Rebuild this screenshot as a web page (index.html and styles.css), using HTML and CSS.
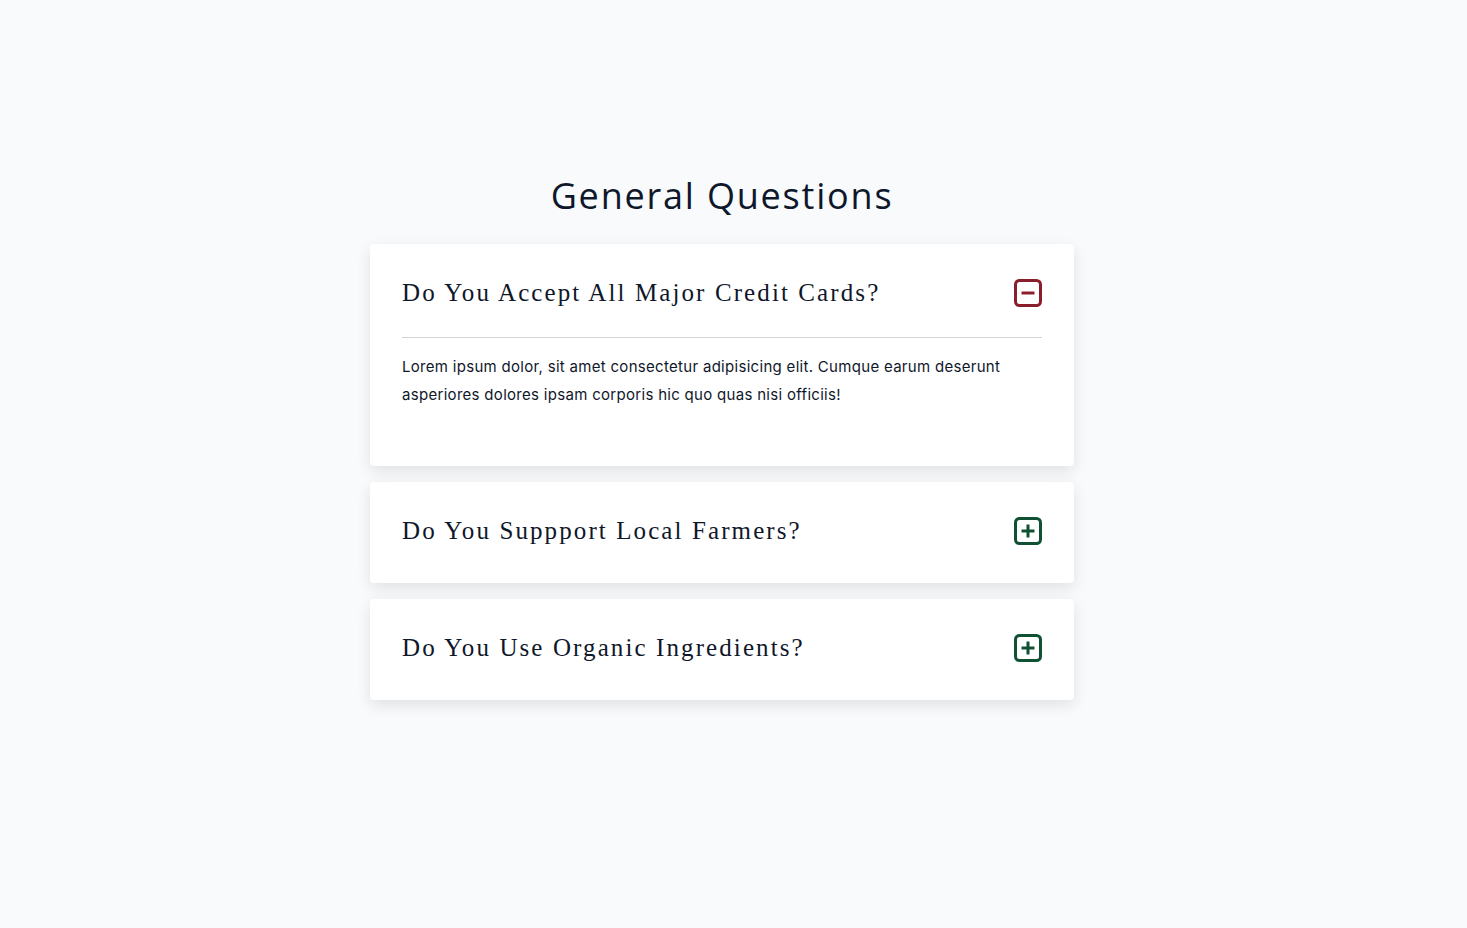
FILE: index.html
```html
<!DOCTYPE html>
<html lang="en">
  <head>
    <meta charset="UTF-8" />
    <meta name="viewport" content="width=device-width, initial-scale=1.0" />
    <title>General Questions</title>
    <link rel="stylesheet" href="styles.css">
  </head>
  <body>
    <main class="questions">
      <h2 class="title">General Questions</h2>

      <article class="question">
        <header class="question-header">
          <h5>Do You Accept All Major Credit Cards?</h5>
          <button class="toggle-btn minus" aria-label="collapse">
            <svg viewBox="0 0 28 28" width="28" height="28">
              <rect x="1.5" y="1.5" width="25" height="25" rx="4" fill="none" stroke="currentColor" stroke-width="3" />
              <line x1="7.5" y1="14" x2="20.5" y2="14" stroke="currentColor" stroke-width="3" />
            </svg>
          </button>
        </header>
        <p class="answer">
          Lorem ipsum dolor, sit amet consectetur adipisicing elit. Cumque earum deserunt
          asperiores dolores ipsam corporis hic quo quas nisi officiis!
        </p>
      </article>

      <article class="question">
        <header class="question-header">
          <h5>Do You Suppport Local Farmers?</h5>
          <button class="toggle-btn plus" aria-label="expand">
            <svg viewBox="0 0 28 28" width="28" height="28">
              <rect x="1.5" y="1.5" width="25" height="25" rx="4" fill="none" stroke="currentColor" stroke-width="3" />
              <line x1="7.5" y1="14" x2="20.5" y2="14" stroke="currentColor" stroke-width="3" />
              <line x1="14" y1="7.5" x2="14" y2="20.5" stroke="currentColor" stroke-width="3" />
            </svg>
          </button>
        </header>
      </article>

      <article class="question">
        <header class="question-header">
          <h5>Do You Use Organic Ingredients?</h5>
          <button class="toggle-btn plus" aria-label="expand">
            <svg viewBox="0 0 28 28" width="28" height="28">
              <rect x="1.5" y="1.5" width="25" height="25" rx="4" fill="none" stroke="currentColor" stroke-width="3" />
              <line x1="7.5" y1="14" x2="20.5" y2="14" stroke="currentColor" stroke-width="3" />
              <line x1="14" y1="7.5" x2="14" y2="20.5" stroke="currentColor" stroke-width="3" />
            </svg>
          </button>
        </header>
      </article>
    </main>
  </body>
</html>
```

FILE: styles.css
```css
body {
  margin: 0;
  padding-right: 23px;
  background-color: #f8fafc;
  color: #0f172a;
  font-family: Inter, "Open Sans", sans-serif;
}
.questions {
  width: 704px;
  margin: 0 auto;
  padding-top: 172px;
}
.title {
  margin: 0 0 24px;
  text-align: center;
  font-family: "Open Sans", sans-serif;
  font-weight: 400;
  font-size: 36px;
  line-height: 48px;
  letter-spacing: 1.8px;
  color: #0f172a;
}
.question {
  background-color: white;
  border-radius: 4px;
  box-shadow: 0 5px 15px rgba(0, 0, 0, 0.1);
  padding: 30px 32px 34px;
  margin-bottom: 16px;
}
.question-header {
  display: flex;
  justify-content: space-between;
  align-items: center;
  height: 37px;
}
.question-header h5 {
  margin: 0;
  font-family: "Liberation Serif", serif;
  font-weight: 400;
  font-size: 25px;
  letter-spacing: 2.1px;
  color: #0f172a;
}
.toggle-btn {
  background: none;
  border: none;
  padding: 0;
  width: 28px;
  height: 28px;
  cursor: pointer;
}
.toggle-btn svg {
  display: block;
}
.toggle-btn.minus {
  color: #8b1e2b;
}
.toggle-btn.plus {
  color: #0f5132;
}
.answer {
  margin: 26px 0 23px;
  padding-top: 15px;
  border-top: 1px solid #d4d4d8;
  font-size: 15px;
  line-height: 28px;
  letter-spacing: 0.3px;
  color: #0f172a;
}
```
